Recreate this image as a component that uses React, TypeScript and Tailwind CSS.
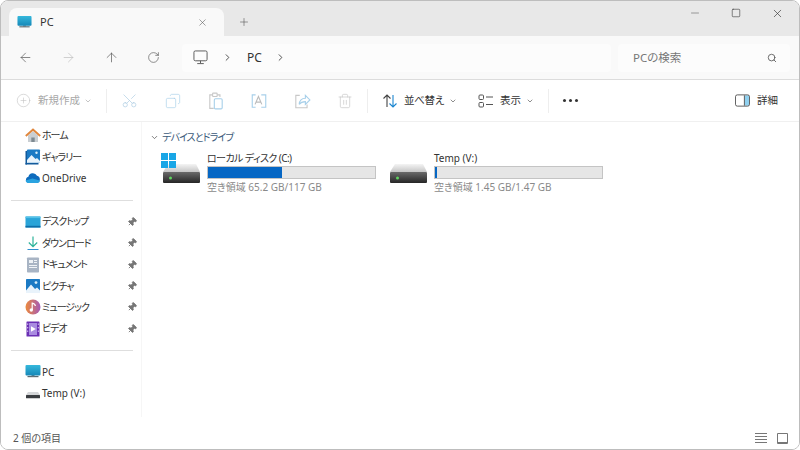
import {
  ArrowLeft, ArrowRight, ArrowUp, RotateCw, ChevronRight, ChevronDown, Search, Plus, X, Minus, Square,
  CirclePlus, Scissors, Copy, Trash2, Pin,
} from "lucide-react";

const font = "font-['Noto_Sans','Noto_Sans_CJK_JP',sans-serif] [font-feature-settings:'palt']";

function MonitorColor({ className }: { className?: string }) {
  return (
    <svg viewBox="0 0 16 16" className={className}>
      <defs>
        <linearGradient id="mon" x1="0" y1="0" x2="0" y2="1">
          <stop offset="0" stopColor="#35b8dc" />
          <stop offset="1" stopColor="#1688b8" />
        </linearGradient>
      </defs>
      <rect x="2.5" y="12" width="11" height="1.2" fill="#5a6a72" />
      <rect x="6.5" y="11" width="3" height="1.6" fill="#6b7a80" />
      <rect x="0.5" y="1" width="15" height="10.5" rx="1" fill="url(#mon)" />
    </svg>
  );
}

function Home() {
  return (
    <svg viewBox="0 0 16 16" className="w-4 h-4">
      <path d="M3 7.5 8 3l5 4.5V14H3z" fill="#c9ced2" />
      <rect x="6.3" y="9.5" width="3.4" height="4.5" fill="#7e8a92" />
      <path d="M0.8 8 8 1.5 15.2 8" fill="none" stroke="#e0863c" strokeWidth="1.9" />
    </svg>
  );
}

function Picture({ bg = "#1b7ac4" }: { bg?: string }) {
  return (
    <svg viewBox="0 0 16 16" className="w-4 h-4">
      <rect x="1" y="1" width="14" height="14" rx="0.8" fill={bg} />
      <circle cx="11" cy="4.6" r="1.4" fill="#d8eefa" />
      <path d="M1 15 1 12.5 6 6.5 10 11 12 9.5 15 12.5 15 15z" fill="#e9f3fb" />
    </svg>
  );
}

function Gallery() {
  return (
    <svg viewBox="0 0 16 16" className="w-4 h-4">
      <rect x="2" y="0.5" width="13" height="13" rx="0.8" fill="#1b7ac4" />
      <circle cx="11.5" cy="3.8" r="1.2" fill="#d8eefa" />
      <path d="M2 13.5V11l4.5-5 4 4 1.5-1 3 3v1.5z" fill="#e9f3fb" />
      <rect x="0.5" y="2" width="1.5" height="13.5" fill="#125a9c" />
      <rect x="0.5" y="14" width="13" height="1.5" fill="#125a9c" />
    </svg>
  );
}

function Cloud() {
  return (
    <svg viewBox="0 0 16 16" className="w-4 h-4">
      <path d="M4 13a3.2 3.2 0 0 1-.6-6.3A4.6 4.6 0 0 1 12 5.8 3.7 3.7 0 0 1 12 13z" fill="#0f6cbd" />
      <path d="M4 13c-1.8 0-3.2-1-3.5-2.6l7-1.8 7.2 2C15.2 12.2 13.8 13 12 13z" fill="#2aa3e0" />
    </svg>
  );
}

function Desktop() {
  return (
    <svg viewBox="0 0 16 16" className="w-4 h-4">
      <rect x="0.5" y="2.5" width="15" height="11" rx="0.6" fill="#2aa4d8" />
      <rect x="0.5" y="11.8" width="15" height="1.7" fill="#0f6ea8" />
      <rect x="0.5" y="2.5" width="15" height="1.6" fill="#55c2e8" />
    </svg>
  );
}

function Download() {
  return (
    <svg viewBox="0 0 16 16" className="w-4 h-4" fill="none" stroke="#2eb39a" strokeWidth="1.2">
      <path d="M8 1.5v10M3.8 7.5 8 11.7l4.2-4.2" />
      <path d="M2.5 14.5h11" stroke="#2f8fd0" />
    </svg>
  );
}

function Doc() {
  return (
    <svg viewBox="0 0 16 16" className="w-4 h-4">
      <rect x="2" y="0.5" width="12" height="15" rx="0.8" fill="#a8b4c4" />
      <rect x="4" y="3" width="4" height="3" fill="#eef2f6" />
      <rect x="9" y="3" width="3" height="1" fill="#eef2f6" />
      <rect x="9" y="5" width="3" height="1" fill="#eef2f6" />
      <rect x="4" y="8" width="8" height="1" fill="#eef2f6" />
      <rect x="4" y="10" width="8" height="1" fill="#eef2f6" />
    </svg>
  );
}

function Music() {
  return (
    <svg viewBox="0 0 16 16" className="w-4 h-4">
      <defs>
        <linearGradient id="mus" x1="0" y1="0" x2="1" y2="0">
          <stop offset="0" stopColor="#ec8a3c" />
          <stop offset="1" stopColor="#a45ab8" />
        </linearGradient>
      </defs>
      <circle cx="8" cy="8" r="7.5" fill="url(#mus)" />
      <circle cx="6.3" cy="11" r="1.7" fill="#fff" />
      <path d="M7.2 11V4.2c1.4.3 3 1 3.2 2.8" fill="none" stroke="#fff" strokeWidth="1.2" />
    </svg>
  );
}

function Video() {
  return (
    <svg viewBox="0 0 16 16" className="w-4 h-4">
      <rect x="1.5" y="0.5" width="13" height="15" rx="0.6" fill="#6a2fb4" />
      <rect x="4" y="2" width="8" height="12" fill="#a98be0" />
      <path d="M6 5.2 10.8 8 6 10.8z" fill="#fff" />
      <g fill="#d9c8f2">
        <rect x="2.2" y="2.5" width="1" height="1.4" />
        <rect x="2.2" y="6" width="1" height="1.4" />
        <rect x="2.2" y="9.5" width="1" height="1.4" />
        <rect x="12.8" y="2.5" width="1" height="1.4" />
        <rect x="12.8" y="6" width="1" height="1.4" />
        <rect x="12.8" y="9.5" width="1" height="1.4" />
      </g>
    </svg>
  );
}

function SmallDrive() {
  return (
    <svg viewBox="0 0 16 16" className="w-4 h-4">
      <path d="M3 6h10l2 3H1z" fill="#d4d6d8" />
      <rect x="1" y="9" width="14" height="3.2" rx="0.5" fill="#3a3d40" />
    </svg>
  );
}

function Drive({ win }: { win?: boolean }) {
  return (
    <svg viewBox="0 0 40 34" className="w-[40px] h-[34px] shrink-0">
      <defs>
        <linearGradient id="drv" x1="0" y1="0" x2="0" y2="1">
          <stop offset="0" stopColor="#6a6a6a" />
          <stop offset="1" stopColor="#262626" />
        </linearGradient>
        <linearGradient id="top" x1="0" y1="0" x2="0" y2="1">
          <stop offset="0" stopColor="#f4f4f4" />
          <stop offset="1" stopColor="#c6c6c6" />
        </linearGradient>
      </defs>
      <path d="M7 11h28l4 8H2z" fill="url(#top)" />
      <rect x="2" y="19" width="37" height="11" rx="1" fill="url(#drv)" />
      <rect x="8" y="23.5" width="3" height="3" rx="1.5" fill="#5fd45f" />
      {win && (
        <g fill="#19a6e6">
          <rect x="0" y="0" width="7" height="7" />
          <rect x="8" y="0" width="7" height="7" />
          <rect x="0" y="8" width="7" height="7" />
          <rect x="8" y="8" width="7" height="7" />
        </g>
      )}
    </svg>
  );
}

function Clipboard2() {
  return (
    <svg viewBox="0 0 16 16" className="w-[18px] h-[18px]" fill="none" strokeWidth="1">
      <path d="M5 2.500H2.500v12H6" stroke="#c8c8c8" />
      <path d="M9 2.500h2.500v2" stroke="#c8c8c8" />
      <rect x="5" y="1" width="4" height="3" rx="0.5" stroke="#c8c8c8" />
      <rect x="6.500" y="6" width="7" height="9" rx="1" stroke="#a8d0ea" />
    </svg>
  );
}

function Rename() {
  return (
    <svg viewBox="0 0 16 16" className="w-[18px] h-[18px]" fill="none" strokeWidth="1">
      <path d="M10 2.500h4v11h-4M5 13.500H2v-11h3" stroke="#a8d0ea" />
      <path d="M4.500 11 7.500 4l3 7M5.500 9h4" stroke="#bcbcbc" />
    </svg>
  );
}

function Share() {
  return (
    <svg viewBox="0 0 16 16" className="w-[18px] h-[18px]" fill="none" strokeWidth="1">
      <path d="M6 3H2.500v11h10v-3" stroke="#c8c8c8" />
      <path d="M5.500 11c.3-3.500 2.500-5.500 5.500-5.500V3l4 4-4 4V8.500c-2.500 0-4.500 1-5.500 2.500z" stroke="#a8d0ea" />
    </svg>
  );
}

function SortIcon() {
  return (
    <svg viewBox="0 0 16 16" className="w-4 h-4" fill="none" strokeWidth="1.1">
      <path d="M5 14V2M1.500 5.500 5 2l3.500 3.500" stroke="#444" />
      <path d="M11 2v12M7.500 10.500 11 14l3.500-3.500" stroke="#1c86d0" />
    </svg>
  );
}

function ViewIcon() {
  return (
    <svg viewBox="0 0 16 16" className="w-4 h-4" fill="none" stroke="#555" strokeWidth="1">
      <rect x="1" y="2" width="4.500" height="4.500" rx="1" />
      <rect x="1" y="9.500" width="4.500" height="4.500" rx="1" />
      <path d="M8 4h7M8 11.500h7" />
    </svg>
  );
}

function DetailsIcon() {
  return (
    <svg viewBox="0 0 16 13" className="w-[15px] h-[13px]" fill="none">
      <rect x="10" y="1" width="5" height="11" fill="#8fd0ef" />
      <rect x="0.500" y="0.500" width="15" height="12" rx="2" stroke="#555" />
      <path d="M10 1v11" stroke="#555" />
    </svg>
  );
}

function PcOutline() {
  return (
    <svg viewBox="0 0 16 16" className="w-[15px] h-[15px]" fill="none" stroke="#555" strokeWidth="1">
      <rect x="1" y="1" width="14" height="10.500" rx="1.500" />
      <path d="M8 11.500v2.500M4.500 14.500h7" />
    </svg>
  );
}

function ListIcon() {
  return (
    <svg viewBox="0 0 12 12" className="w-3 h-3" fill="none" stroke="#777" strokeWidth="1">
      <path d="M0 1.500h12M0 4.500h12M0 7.500h12M0 10.500h12" />
    </svg>
  );
}

function NavItem({ icon, label, pin, kana }: { icon: React.ReactNode; label: string; pin?: boolean; kana?: boolean }) {
  return (
    <div className="h-[21.4px] flex items-center pl-6 pr-[4px]">
      <span className="w-[17px] flex shrink-0">{icon}</span>
      <span className={"text-[10px] text-[#333] flex-1 whitespace-nowrap " + (kana ? "tracking-[-1px]" : "")}>{label}</span>
      {pin && <Pin size={10} className="text-[#777] fill-[#777] rotate-45" />}
    </div>
  );
}

function DriveTile({ name, used, free, win, kana }: { name: string; used: string; free: string; win?: boolean; kana?: boolean }) {
  return (
    <div className="flex items-start gap-[6px] w-[227px]">
      <div className="mt-[2px]">
        <Drive win={win} />
      </div>
      <div className="w-[169px] flex flex-col">
        <span className={"text-[10px] leading-[14px] text-[#333] whitespace-nowrap " + (kana ? "tracking-[-0.6px]" : "")}>{name}</span>
        <div className="h-[13px] bg-[#e6e6e6] border border-[#c4c4c4] mt-[1px]">
          <div className="h-full bg-[#0667c4]" style={{ width: used }} />
        </div>
        <span className="text-[10px] leading-[14px] mt-[1px] text-[#8a8a8a] whitespace-nowrap">{free}</span>
      </div>
    </div>
  );
}

function CmdCell({ children }: { children: React.ReactNode }) {
  return <div className="w-[43px] flex justify-center shrink-0">{children}</div>;
}

const gray = "#c6c6c6";

export default function App() {
  return (
    <div className={"w-[800px] h-[450px] bg-white overflow-hidden " + font}>
      <div className="w-full h-full flex flex-col border border-[#bdbdbd] rounded-lg overflow-hidden bg-white">
        {/* title bar */}
        <div className="h-[35px] bg-[#e8e8e8] flex shrink-0 pt-[7px] pl-2">
          <div className="w-[215px] h-[28px] bg-[#f9f9f9] rounded-t-lg flex items-center pl-2 pr-[16px]">
            <MonitorColor className="w-[15px] h-[15px]" />
            <span className="ml-[8px] text-[11px] text-[#333] flex-1">PC</span>
            <X size={11} className="text-[#555]" strokeWidth={1.2} />
          </div>
          <div className="w-[40px] h-[28px] flex items-center justify-center">
            <Plus size={12} className="text-[#555]" strokeWidth={1.2} />
          </div>
          <div className="flex-1" />
          <div className="flex items-start -mt-[7px] pt-[6px] pr-[15px] gap-[30px]">
            <Minus size={12} className="text-[#555]" strokeWidth={1.1} />
            <Square size={10} className="text-[#333] mt-px" strokeWidth={1.4} />
            <X size={13} className="text-[#333]" strokeWidth={1.2} />
          </div>
        </div>

        {/* address bar */}
        <div className="h-[44px] bg-[#f9f9f9] border-b border-[#dcdcdc] flex items-center shrink-0 pl-[17px] pr-[9px]">
          <div className="w-[165px] flex items-center gap-[28px] shrink-0">
            <ArrowLeft size={15} className="text-[#555]" strokeWidth={1.1} />
            <ArrowRight size={15} className="text-[#bdbdbd]" strokeWidth={1.1} />
            <ArrowUp size={15} className="text-[#555]" strokeWidth={1.1} />
            <RotateCw size={13} className="text-[#555]" strokeWidth={1.2} />
          </div>
          <div className="w-[429px] h-[28px] ml-[-1px] bg-[#fcfcfc] rounded-[4px] flex items-center pl-[11px] shrink-0">
            <PcOutline />
            <ChevronRight size={11} className="ml-[14px] text-[#444]" />
            <span className="ml-[14px] text-[12px] text-[#333]">PC</span>
            <ChevronRight size={11} className="ml-[13px] text-[#444]" />
          </div>
          <div className="flex-1 h-[28px] ml-[7px] bg-[#fcfcfc] rounded-[4px] flex items-center pl-[15px] pr-[13px] justify-between">
            <span className="text-[11.5px] text-[#777]">PCの検索</span>
            <Search size={10} className="text-[#555]" />
          </div>
        </div>

        {/* command bar */}
        <div className="h-[42px] bg-white border-b border-[#f0f0f0] flex items-center shrink-0 pl-[15px] pr-[21px]">
          <CirclePlus size={15} color={gray} strokeWidth={1} />
          <span className="ml-[7px] text-[10.5px] text-[#a8a8a8] whitespace-nowrap">新規作成</span>
          <ChevronDown size={8} className="ml-[4px] text-[#a8a8a8]" />
          <div className="w-px h-[24px] bg-[#eee] ml-[14px]" />
          <div className="flex items-center ml-[1px]">
            <CmdCell><Scissors size={17} color="#b0cfe4" strokeWidth={1} className="-rotate-90" /></CmdCell>
            <CmdCell><Copy size={16} color="#a8d0ea" strokeWidth={1} className="-scale-x-100" /></CmdCell>
            <CmdCell><Clipboard2 /></CmdCell>
            <CmdCell><Rename /></CmdCell>
            <CmdCell><Share /></CmdCell>
            <CmdCell><Trash2 size={16} color={gray} strokeWidth={1} /></CmdCell>
          </div>
          <div className="w-px h-[24px] bg-[#eee] ml-[1px]" />
          <div className="ml-[14px]">
            <SortIcon />
          </div>
          <span className="ml-[6px] text-[10.5px] text-[#333] whitespace-nowrap tracking-[-0.3px]">並べ替え</span>
          <ChevronDown size={8} className="ml-[5px] text-[#555]" />
          <div className="ml-[21px]">
            <ViewIcon />
          </div>
          <span className="ml-[6px] text-[10.5px] text-[#333] whitespace-nowrap">表示</span>
          <ChevronDown size={8} className="ml-[5px] text-[#555]" />
          <div className="w-px h-[24px] bg-[#eee] ml-[14px]" />
          <div className="ml-[14px] flex gap-[3px]">
            <span className="w-[3px] h-[3px] rounded-full bg-[#333]" />
            <span className="w-[3px] h-[3px] rounded-full bg-[#333]" />
            <span className="w-[3px] h-[3px] rounded-full bg-[#333]" />
          </div>
          <div className="flex-1" />
          <DetailsIcon />
          <span className="ml-[7px] text-[10.5px] text-[#333] whitespace-nowrap">詳細</span>
        </div>

        {/* body */}
        <div className="flex-1 flex min-h-0">
          <div className="w-[141px] shrink-0 pt-[3px] border-r border-[#f6f6f6] mb-[10px]">
            <NavItem icon={<Home />} label="ホーム" kana />
            <NavItem icon={<Gallery />} label="ギャラリー" kana />
            <NavItem icon={<Cloud />} label="OneDrive" />
            <div className="h-px bg-[#dedede] ml-[10px] mr-[8px] my-[10.500px]" />
            <NavItem icon={<Desktop />} label="デスクトップ" pin kana />
            <NavItem icon={<Download />} label="ダウンロード" pin kana />
            <NavItem icon={<Doc />} label="ドキュメント" pin kana />
            <NavItem icon={<Picture />} label="ピクチャ" pin kana />
            <NavItem icon={<Music />} label="ミュージック" pin kana />
            <NavItem icon={<Video />} label="ビデオ" pin kana />
            <div className="h-px bg-[#dedede] ml-[10px] mr-[8px] my-[10.500px]" />
            <NavItem icon={<MonitorColor className="w-4 h-4" />} label="PC" />
            <NavItem icon={<SmallDrive />} label="Temp (V:)" />
          </div>
          <div className="flex-1 pl-[7px] pt-[7px]">
            <div className="flex items-center gap-[3px] h-[16px] ml-[1px]">
              <ChevronDown size={9} className="text-[#555]" />
              <span className="text-[10px] text-[#3b5a7a] tracking-[-0.9px]">デバイスとドライブ</span>
            </div>
            <div className="flex mt-[6px] ml-[12px]">
              <DriveTile name="ローカル ディスク (C:)" used="44.4%" free="空き領域 65.2 GB/117 GB" win kana />
              <DriveTile name="Temp (V:)" used="1.200%" free="空き領域 1.45 GB/1.47 GB" />
            </div>
          </div>
        </div>

        {/* status bar */}
        <div className="h-[22px] bg-white flex items-center shrink-0 pl-[12px] pr-[11px]">
          <span className="text-[10px] text-[#555] flex-1">2 個の項目</span>
          <div className="mr-[10px]">
            <ListIcon />
          </div>
          <div className="w-[11px] h-[11px] border border-[#777] border-b-2 rounded-[1px]" />
        </div>
      </div>
    </div>
  );
}
